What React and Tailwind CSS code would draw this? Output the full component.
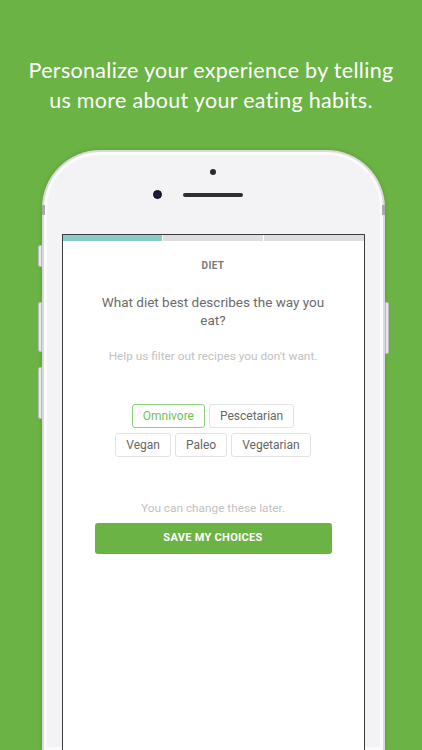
import React from "react";

const diets = [
  ["Omnivore", "Pescetarian"],
  ["Vegan", "Paleo", "Vegetarian"],
];

const Chip = ({ label, active }) => (
  <div
    className={`h-[24px] px-[10px] flex items-center rounded-[3px] border text-[12px] ${
      active ? "border-[#8fd07c] text-[#6fbf5a]" : "border-[#e2e2e2] text-[#666666]"
    }`}
  >
    {label}
  </div>
);

export default function App() {
  return (
    <div
      className="w-[422px] h-[750px] bg-[#6bb344] overflow-hidden flex flex-col items-center"
      style={{ fontFamily: "Roboto, 'Liberation Sans', sans-serif" }}
    >
      {/* headline */}
      <div
        className="pt-[55px] text-white text-center text-[21.5px] leading-[30px] tracking-[0.3px]"
        style={{ fontFamily: "Lato, 'Open Sans', sans-serif" }}
      >
        <div>Personalize your experience by telling</div>
        <div>us more about your eating habits.</div>
      </div>

      {/* phone */}
      <div className="relative mt-[35px] ml-[4px] w-[343px] flex-1 rounded-t-[58px] bg-[#f3f3f5] border-[2px] border-b-0 border-[#dadade] shadow-[inset_0_0_0_3px_#fbfbfc,0_0_4px_rgba(0,0,0,0.15)] flex flex-col px-[18px]">
        {/* side buttons */}
        <div className="absolute left-[-6px] top-[93px] w-[4px] h-[22px] rounded-l-[2px] bg-[#e8e8ec] border border-[#b8b8be]" />
        <div className="absolute left-[-6px] top-[150px] w-[4px] h-[50px] rounded-l-[2px] bg-[#e8e8ec] border border-[#b8b8be]" />
        <div className="absolute left-[-6px] top-[215px] w-[4px] h-[52px] rounded-l-[2px] bg-[#e8e8ec] border border-[#b8b8be]" />
        <div className="absolute right-[-6px] top-[150px] w-[4px] h-[52px] rounded-r-[2px] bg-[#e8e8ec] border border-[#b8b8be]" />
        <div className="absolute left-[-2px] top-[53px] w-[3px] h-[10px] bg-[#a9a9ae]" />
        <div className="absolute right-[-2px] top-[53px] w-[3px] h-[10px] bg-[#a9a9ae]" />

        {/* bezel */}
        <div className="h-[82px] flex flex-col items-center">
          <div className="mt-[17px] w-[6px] h-[6px] rounded-full bg-[#2a2a2e]" />
          <div className="mt-[15px] flex items-center">
            <div className="w-[9px] h-[9px] rounded-full bg-[#1b1d3a] border border-[#0d0d14]" />
            <div className="ml-[21px] w-[60px] h-[4px] rounded-full bg-[#2f2f33]" />
            <div className="w-[30px]" />
          </div>
        </div>

        {/* screen */}
        <div className="flex-1 bg-white border-[1.5px] border-b-0 border-[#3c3c3e] flex flex-col items-center">
          <div className="w-full h-[6px] flex gap-[1px]">
            <div className="flex-1 bg-[#8ccbc3]" />
            <div className="flex-1 bg-[#dedede]" />
            <div className="flex-1 bg-[#dedede]" />
          </div>

          <div className="mt-[19px] text-[10px] font-bold tracking-[0.4px] text-[#7a7a7a] leading-[12px]">DIET</div>

          <div className="mt-[21px] w-[240px] text-center text-[13.5px] leading-[18px] text-[#6b6b6b]">
            What diet best describes the way you eat?
          </div>

          <div className="mt-[20px] text-[11.8px] leading-[14px] text-[#c2c2c2]">
            Help us filter out recipes you don't want.
          </div>

          <div className="mt-[41px] flex flex-col items-center gap-[5px]">
            {diets.map((row, i) => (
              <div key={i} className="flex gap-[4px]">
                {row.map((d) => (
                  <Chip key={d} label={d} active={d === "Omnivore"} />
                ))}
              </div>
            ))}
          </div>

          <div className="mt-[44px] text-[11.8px] leading-[14px] text-[#c2c2c2]">You can change these later.</div>

          <button className="mt-[8px] w-[237px] h-[31px] rounded-[3px] bg-[#6bb344] text-white text-[11px] font-bold tracking-[0.3px]">
            SAVE MY CHOICES
          </button>
        </div>
      </div>
    </div>
  );
}
